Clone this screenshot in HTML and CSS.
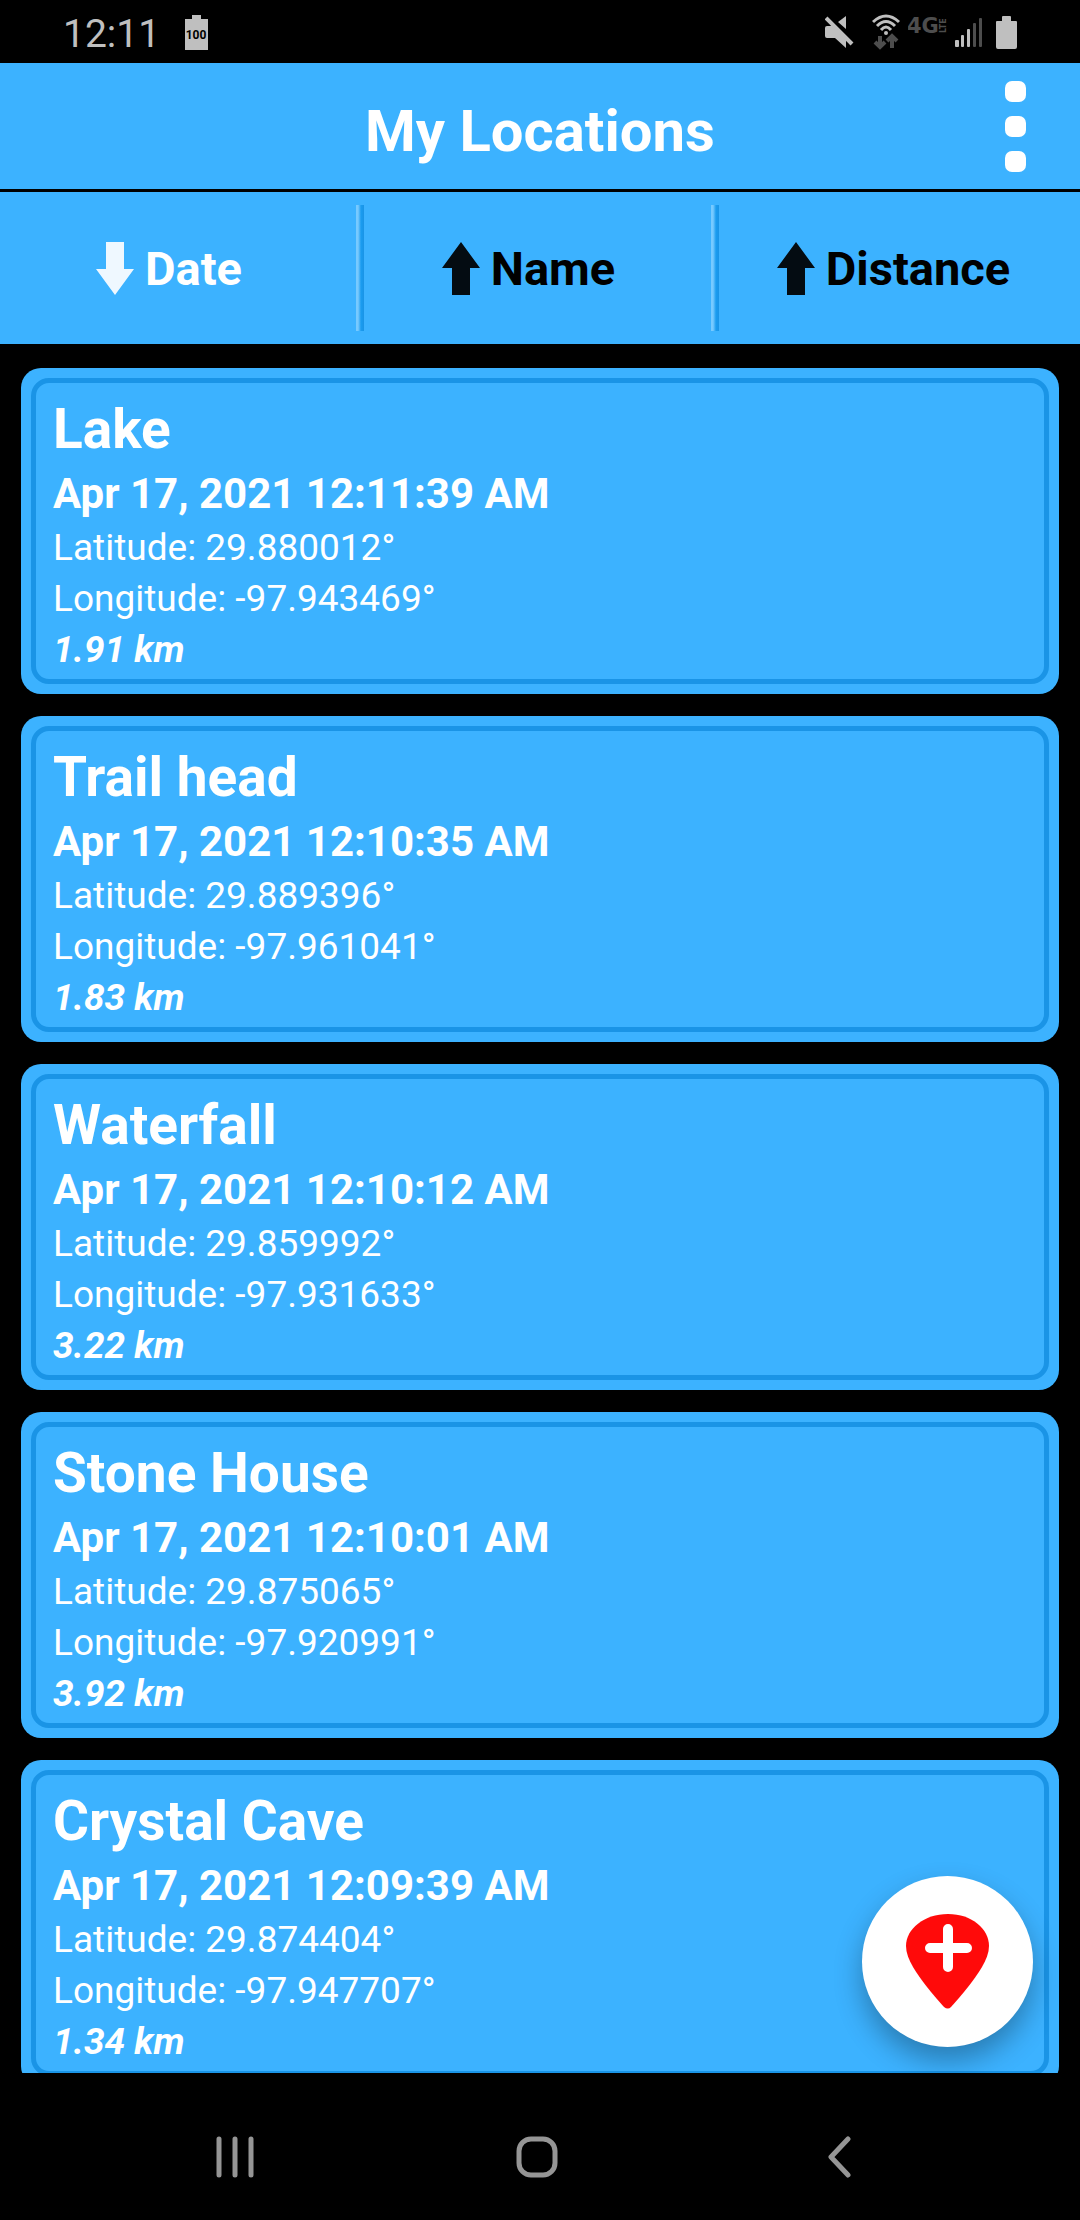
FILE: index.html
```html
<!DOCTYPE html>
<html lang="en">
<head>
  <meta charset="UTF-8" />
  <meta name="viewport" content="width=device-width, initial-scale=1.0"/>
  <title>My Locations</title>
  <link rel="stylesheet" href="styles.css">
</head>
<body>
  <div class="status-bar">
    <span class="clock">12:11</span>
    <svg class="battery-full" width="23" height="35" viewBox="0 0 23 35" aria-label="Battery 100%">
      <path fill="#bfbfbf" d="M7 0h9v4h7v31H0V4h7z"/>
      <text x="11" y="24" text-anchor="middle" class="battery-text">100</text>
    </svg>
    <div class="status-icons">
      <svg width="39" height="36" viewBox="0 -2 39 36" aria-label="Muted">
        <path fill="#bfbfbf" d="M21 0v13L13 6zM2 10h7l12 12v10L10 22H2q-2 0-2-2v-8q0-2 2-2z"/>
        <path stroke="#bfbfbf" stroke-width="4" d="M1 2L27 28"/>
      </svg>
      <svg width="28" height="36" viewBox="0 0 28 36" aria-label="Wi-Fi">
        <g fill="none" stroke="#bfbfbf" stroke-width="3">
          <path d="M1 8Q14-4 27 8"/>
          <path d="M5 12Q14 3 23 12"/>
          <path d="M9 16Q14 10 19 16"/>
        </g>
        <circle cx="14" cy="19" r="2" fill="#bfbfbf"/>
        <path fill="none" stroke="#4d4d4d" stroke-width="4" d="M8 22v10M3 28l5 5 5-5M20 34V23M15 27l5-5 5 5"/>
      </svg>
      <svg width="39" height="36" viewBox="0 -3 39 36" aria-label="4G LTE">
        <text x="-1" y="16" class="network-text">4G</text>
        <text x="-16" y="38" transform="rotate(-90)" class="network-text small">LTE</text>
      </svg>
      <svg width="33" height="36" viewBox="0 -4 33 36" aria-label="Signal">
        <g fill="#bfbfbf">
          <rect x="0" y="22" width="4" height="7" rx="1"/>
          <rect x="6" y="17" width="3" height="12" rx="1"/>
          <rect x="12" y="11" width="3" height="18" rx="1"/>
        </g>
        <g fill="#4d4d4d">
          <rect x="18" y="5" width="3" height="24" rx="1"/>
          <rect x="24" y="0" width="3" height="29" rx="1"/>
        </g>
      </svg>
      <svg width="21" height="36" viewBox="0 -2 21 36" aria-label="Battery">
        <path fill="#bfbfbf" d="M7 0h7q1 0 1 1v4h5q1 0 1 1v25q0 2-2 2H2q-2 0-2-2V6q0-1 1-1h5V1q0-1 1-1z"/>
      </svg>
    </div>
  </div>

  <header>
    <h1>My Locations</h1>
    <button class="menu-btn" aria-label="Menu">
      <span></span>
      <span></span>
      <span></span>
    </button>
  </header>

  <div class="sort-bar">
    <button class="sort-btn active">
      <svg width="38" height="53" viewBox="0 0 38 53"><path d="M10 0h18v27h10L19 53 0 27h10z"/></svg>
      Date
    </button>
    <button class="sort-btn">
      <svg width="38" height="53" viewBox="0 0 38 53"><path d="M19 0l19 26H28v27H10V26H0z"/></svg>
      Name
    </button>
    <button class="sort-btn">
      <svg width="38" height="53" viewBox="0 0 38 53"><path d="M19 0l19 26H28v27H10V26H0z"/></svg>
      Distance
    </button>
  </div>

  <main>
    <ul class="locations">
      <li class="card">
        <div class="card-inner">
          <h2>Lake</h2>
          <p class="date">Apr 17, 2021 12:11:39 AM</p>
          <p>Latitude: 29.880012°</p>
          <p>Longitude: -97.943469°</p>
          <p class="distance">1.91 km</p>
        </div>
      </li>
      <li class="card">
        <div class="card-inner">
          <h2>Trail head</h2>
          <p class="date">Apr 17, 2021 12:10:35 AM</p>
          <p>Latitude: 29.889396°</p>
          <p>Longitude: -97.961041°</p>
          <p class="distance">1.83 km</p>
        </div>
      </li>
      <li class="card">
        <div class="card-inner">
          <h2>Waterfall</h2>
          <p class="date">Apr 17, 2021 12:10:12 AM</p>
          <p>Latitude: 29.859992°</p>
          <p>Longitude: -97.931633°</p>
          <p class="distance">3.22 km</p>
        </div>
      </li>
      <li class="card">
        <div class="card-inner">
          <h2>Stone House</h2>
          <p class="date">Apr 17, 2021 12:10:01 AM</p>
          <p>Latitude: 29.875065°</p>
          <p>Longitude: -97.920991°</p>
          <p class="distance">3.92 km</p>
        </div>
      </li>
      <li class="card">
        <div class="card-inner">
          <h2>Crystal Cave</h2>
          <p class="date">Apr 17, 2021 12:09:39 AM</p>
          <p>Latitude: 29.874404°</p>
          <p>Longitude: -97.947707°</p>
          <p class="distance">1.34 km</p>
        </div>
      </li>
    </ul>
    <button class="add-btn" aria-label="Add location">
      <svg width="83" height="95" viewBox="0 0 83 95">
        <path fill="#ff0a0a" d="M42 0C66 0 83 15 83 32C83 39 80 46 76 53C68 66 57 80 45 93Q42 96 38 93C26 80 15 66 7 53C3 46 0 39 0 32C0 15 18 0 42 0z"/>
        <path stroke="#fff" stroke-width="10" stroke-linecap="round" d="M42 15v38M24 34h37"/>
      </svg>
    </button>
  </main>

  <nav>
    <button aria-label="Recent apps">
      <svg width="38" height="42" viewBox="0 0 38 42"><path d="M3 3v36M19 3v36M35 3v36"/></svg>
    </button>
    <button aria-label="Home">
      <svg width="42" height="42" viewBox="0 0 42 42"><rect x="3" y="3" width="36" height="36" rx="12"/></svg>
    </button>
    <button aria-label="Back">
      <svg width="24" height="42" viewBox="0 0 24 42"><path d="M21 3L4 21l17 18"/></svg>
    </button>
  </nav>
</body>
</html>
```
FILE: styles.css
```css
* {
  box-sizing: border-box;
  margin: 0;
  padding: 0;
}
body {
  font-family: Roboto, sans-serif;
  background: #000;
  color: #fff;
  height: 100vh;
  display: flex;
  flex-direction: column;
}
button {
  font-family: inherit;
  background: none;
  border: none;
  cursor: pointer;
}

/* Status bar */
.status-bar {
  display: flex;
  align-items: flex-start;
  height: 63px;
  padding: 0 63px;
}
.clock {
  font-size: 39px;
  line-height: 69px;
  color: #bfbfbf;
}
.battery-full {
  margin: 15px 0 0 25px;
}
.battery-text {
  font-size: 12px;
  font-weight: bold;
}
.network-text {
  font-family: "DejaVu Sans", sans-serif;
  font-size: 21px;
  font-weight: bold;
  fill: #4d4d4d;
}
.network-text.small {
  font-size: 8px;
}
.status-icons {
  display: flex;
  gap: 8px;
  margin: 14px 0 0 auto;
}

/* Header */
header {
  display: grid;
  grid-template-columns: 1fr auto 1fr;
  align-items: center;
  height: 129px;
  background: #3cb2ff;
  border-bottom: 3px solid #000;
}
h1 {
  grid-column: 2;
  font-size: 58px;
  line-height: 68px;
  padding-top: 10px;
}
.menu-btn {
  justify-self: end;
  display: flex;
  flex-direction: column;
  gap: 14px;
  margin-right: 54px;
}
.menu-btn span {
  width: 21px;
  height: 21px;
  border-radius: 7px;
  background: #fff;
}

/* Sort buttons */
.sort-bar {
  display: grid;
  grid-template-columns: 364fr 355fr 361fr;
  height: 152px;
  padding: 13px 0;
  background: #3cb2ff;
}
.sort-btn {
  display: flex;
  align-items: center;
  justify-content: center;
  gap: 11px;
  padding-right: 12px;
  font-size: 47px;
  font-weight: bold;
  color: #000;
}
.sort-btn svg {
  fill: #040c12;
}
.sort-btn.active {
  color: #fff;
}
.sort-btn.active svg {
  fill: #eff8ff;
}
.sort-btn:not(:last-child) {
  padding-right: 26px;
  background: linear-gradient(to right, #77caff 0, #77caff 2px, #1a9cf0 5px, #1a94e6 8px) right / 8px 100% no-repeat;
}

/* Location list */
main {
  position: relative;
  flex: 1;
  min-height: 0;
  overflow: hidden;
}
.locations {
  list-style: none;
  display: flex;
  flex-direction: column;
  gap: 22px;
  padding: 24px 21px;
}
.card {
  padding: 10px;
  border-radius: 20px;
  background: #3cb2ff;
}
.card-inner {
  padding: 9px 17px 4px;
  border: 5px solid #1a94e6;
  border-radius: 18px;
}
.card h2 {
  font-size: 55px;
  line-height: 74px;
}
.card p {
  font-size: 37px;
  line-height: 51px;
}
.card .date {
  font-size: 42px;
  line-height: 56px;
  font-weight: bold;
}
.card .distance {
  font-weight: bold;
  font-style: italic;
}
.add-btn {
  position: absolute;
  right: 47px;
  bottom: 26px;
  display: flex;
  align-items: center;
  justify-content: center;
  width: 171px;
  height: 171px;
  border-radius: 50%;
  background: #fff;
  box-shadow: 0 14px 28px rgba(0, 0, 0, 0.3);
}

/* System navigation */
nav {
  display: grid;
  grid-template-columns: repeat(3, 1fr);
  height: 147px;
  padding: 0 90px 0 84px;
}
nav button {
  display: flex;
  align-items: center;
  justify-content: center;
  padding-top: 20px;
}
nav svg {
  fill: none;
  stroke: #959595;
  stroke-width: 5px;
  stroke-linecap: round;
  stroke-linejoin: round;
}
```
